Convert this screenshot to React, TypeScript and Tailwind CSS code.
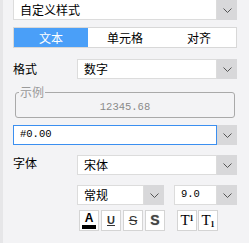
const cjk = { fontFamily: '"Noto Sans CJK SC", "Noto Sans", sans-serif' };

const Chevron = () => (
 <svg width="9" height="5" viewBox="0 0 9 5" fill="none">
  <path d="M0.5 0.5 L4.5 4.5 L8.5 0.5" stroke="#555" strokeWidth="1" />
 </svg>
);

interface SelectProps {
 value: string;
 className?: string;
 mono?: boolean;
 focused?: boolean;
 noTop?: boolean;
}

const Select = ({ value, className, mono, focused, noTop }: SelectProps) => (
 <div className={`flex h-[20px] ${className ?? ""}`}>
  <div
   className={`flex-1 flex items-center bg-white pl-[6px] text-[12px] text-black ${
    focused ? "border border-[#3b8ff0]" : "border border-[#dcdcdc]"
   } ${noTop ? "border-t-0" : ""}`}
   style={
    mono
     ? { fontFamily: '"Liberation Mono", monospace', fontSize: "10.5px" }
     : cjk
   }
  >
   {value}
  </div>
  <div className="w-[20px] flex items-center justify-center bg-[#d8d8da]">
   <Chevron />
  </div>
 </div>
);

const FmtButton = ({ children }: { children: React.ReactNode }) => (
 <div className="w-[20px] h-[21px] border border-[#d4d4d4] bg-white flex items-center justify-center">
  {children}
 </div>
);

export default function App() {
 return (
  <div
   className="w-[249px] h-[243px] bg-[#f3f3f5] flex overflow-hidden"
   style={cjk}
  >
   <div className="w-[3px] bg-[#e6e6e8]" />
   <div className="flex-1 pl-[10px] pr-[12px] flex flex-col">
    <Select value="自定义样式" className="h-[19px]" noTop />

    <div className="mt-[7px] h-[21px] flex border border-[#d8d8d8] bg-white text-[12px]">
     <div className="flex-1 bg-[#4a9ff8] text-white flex items-center justify-center">
      文本
     </div>
     <div className="flex-1 flex items-center justify-center text-black">
      单元格
     </div>
     <div className="flex-1 flex items-center justify-center text-black">
      对齐
     </div>
    </div>

    <div className="mt-[11px] flex items-center">
     <span className="w-[64px] text-[12px] text-black">格式</span>
     <Select value="数字" className="flex-1" />
    </div>

    <fieldset className="mt-[6px] mx-[2px] border border-[#a9a9a9] rounded-[3px] h-[33px] px-[3px] pb-[4px]">
     <legend className="text-[12px] text-[#9a9a9a] px-[1px] leading-[14px]">
      示例
     </legend>
     <div
      className="text-center text-[#8a8a8a] text-[10.5px] leading-[14px] mt-[1px]"
      style={{ fontFamily: '"Liberation Mono", monospace' }}
     >
      12345.68
     </div>
    </fieldset>

    <Select value="#0.00" className="mt-[7px]" mono focused />

    <div className="mt-[10px] flex items-center">
     <span className="w-[64px] text-[12px] text-black -mt-[5px]">字体</span>
     <Select value="宋体" className="flex-1" />
    </div>

    <div className="mt-[10px] flex pl-[64px] gap-[10px]">
     <Select value="常规" className="w-[87px]" />
     <Select value="9.0" className="w-[63px]" mono />
    </div>

    <div className="mt-[5px] flex pl-[66px]">
     <div className="flex gap-[2px]">
      <FmtButton>
       <div className="flex flex-col items-center">
        <span
         className="text-[12px] font-bold leading-[11px] text-black"
         style={{ fontFamily: '"Liberation Sans", sans-serif' }}
        >
         A
        </span>
        <div className="w-[14px] h-[4px] bg-black mt-[1px]" />
       </div>
      </FmtButton>
      <FmtButton>
       <span
        className="text-[11px] underline font-bold text-[#333]"
        style={{ fontFamily: '"Liberation Sans", sans-serif' }}
       >
        U
       </span>
      </FmtButton>
      <FmtButton>
       <span
        className="text-[13px] line-through text-[#333]"
        style={{ fontFamily: '"Liberation Sans", sans-serif' }}
       >
        S
       </span>
      </FmtButton>
      <FmtButton>
       <span
        className="text-[14px] font-bold text-[#444]"
        style={{
         fontFamily: '"Liberation Sans", sans-serif',
         textShadow: "0 0 1px #888",
        }}
       >
        S
       </span>
      </FmtButton>
     </div>
     <div className="flex gap-[1px] ml-[12px]">
      <FmtButton>
       <span
        className="text-[15px] text-black leading-none"
        style={{ fontFamily: '"Liberation Serif", serif' }}
       >
        T<sup className="text-[8px] font-bold">1</sup>
       </span>
      </FmtButton>
      <FmtButton>
       <span
        className="text-[15px] text-black leading-none"
        style={{ fontFamily: '"Liberation Serif", serif' }}
       >
        T<sub className="text-[8px] font-bold">1</sub>
       </span>
      </FmtButton>
     </div>
    </div>
   </div>
  </div>
 );
}
